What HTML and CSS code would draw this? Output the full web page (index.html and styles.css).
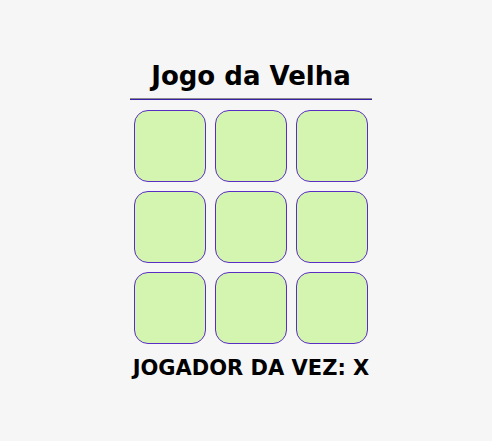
FILE: index.html
```html
<!DOCTYPE html>
<html lang="pt">
<head>
<meta charset="utf-8">
<title>Jogo da Velha</title>
<link rel="stylesheet" href="styles.css">
</head>
<body>
<main class="game">
  <h1 class="title">Jogo da Velha</h1>
  <div class="divider"></div>
  <div class="board">
    <button class="cell"></button>
    <button class="cell"></button>
    <button class="cell"></button>
    <button class="cell"></button>
    <button class="cell"></button>
    <button class="cell"></button>
    <button class="cell"></button>
    <button class="cell"></button>
    <button class="cell"></button>
  </div>
  <p class="status">JOGADOR DA VEZ: X</p>
</main>
</body>
</html>
```
FILE: styles.css
```css
html, body {
  margin: 0;
  padding: 0;
  background: #f6f6f6;
}
body {
  font-family: "Comic Sans MS", "DejaVu Sans", sans-serif;
  color: #000;
}
.game {
  margin-left: 10px;
  padding-top: 56px;
  display: flex;
  flex-direction: column;
  align-items: center;
}
.title {
  margin: 0 0 2px;
  font-size: 26px;
  line-height: 40px;
  height: 40px;
  font-weight: bold;
}
.divider {
  width: 242px;
  height: 0;
  border-top: 1px solid #8a8a8a;
  border-bottom: 1px solid #3a1ea8;
}
.board {
  margin-top: 10px;
  display: grid;
  grid-template-columns: repeat(3, 72px);
  grid-auto-rows: 72px;
  gap: 9px;
}
.cell {
  margin: 0;
  padding: 0;
  background: #d4f5b0;
  border: 1px solid #5a2ec4;
  border-radius: 14px;
}
.status {
  margin: 10px 0 0;
  font-size: 21px;
  line-height: 28px;
  font-weight: bold;
}
```
